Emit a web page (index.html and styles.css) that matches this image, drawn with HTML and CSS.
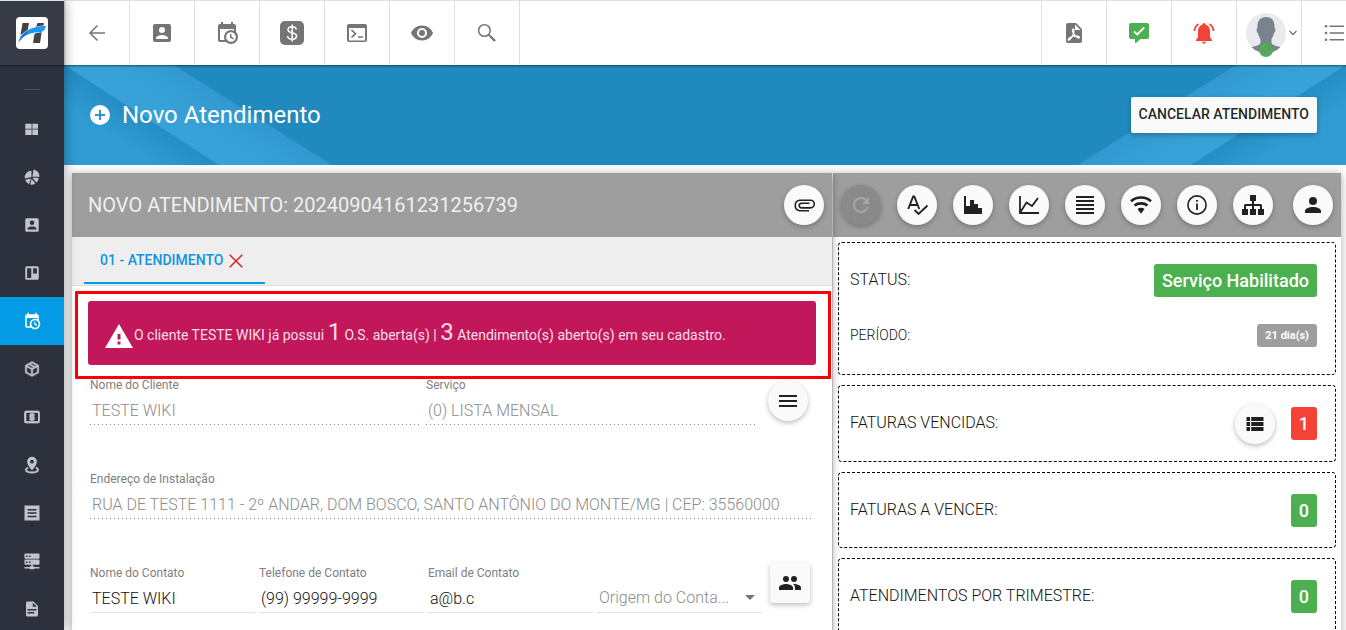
FILE: index.html
```html
<!DOCTYPE html>
<html lang="pt-BR">
<head>
<meta charset="utf-8">
<meta name="viewport" content="width=device-width, initial-scale=1">
<title>Novo Atendimento</title>
<link rel="stylesheet" href="styles.css">
</head>
<body>
<svg class="defs" aria-hidden="true">
  <symbol id="i-account-box" viewBox="0 0 24 24"><path d="M6,17C6,15 10,13.9 12,13.9C14,13.9 18,15 18,17V18H6M15,9A3,3 0 0,1 12,12A3,3 0 0,1 9,9A3,3 0 0,1 12,6A3,3 0 0,1 15,9M3,5V19A2,2 0 0,0 5,21H19A2,2 0 0,0 21,19V5A2,2 0 0,0 19,3H5C3.89,3 3,3.9 3,5Z"/></symbol>
  <symbol id="i-calendar-clock" viewBox="0 0 24 24"><path d="M15,13H16.5V15.82L18.94,17.23L18.19,18.53L15,16.69V13M19,8H5V19H9.67C9.24,18.09 9,17.07 9,16A7,7 0 0,1 16,9C17.07,9 18.09,9.24 19,9.67V8M5,21C3.89,21 3,20.1 3,19V5C3,3.89 3.89,3 5,3H6V1H8V3H16V1H18V3H19A2,2 0 0,1 21,5V11.1C22.24,12.36 23,14.09 23,16A7,7 0 0,1 16,23C14.09,23 12.36,22.24 11.1,21H5M16,11.15A4.85,4.85 0 0,0 11.15,16C11.15,18.68 13.32,20.85 16,20.85A4.85,4.85 0 0,0 20.85,16C20.85,13.32 18.68,11.15 16,11.15Z"/></symbol>
</svg>
<div class="app">
  <aside class="sidebar">
    <a class="logo" href="#" aria-label="Início">
      <svg viewBox="0 0 32 32" width="32" height="32">
        <rect width="32" height="32" rx="4" fill="#fff"/>
        <path fill="#424448" d="M6.500 6H13L11.500 14L4.500 18ZM21.500 6H28L27 10L19.500 11.500ZM18.500 17L26 13L24 26H17Z"/>
        <path fill="#0b74f0" stroke="#fff" stroke-width=".6" d="M2 26.500C3 17 12 10 30 8.500C29 14 27 15.500 21 15.500C13 16 7 19 2 26.500Z"/>
        <path fill="#149bf5" d="M12 13C17 10.500 23 9.400 29.500 9C28.500 13.500 26.500 15 21 15C17 15 14 15.800 11 17Z"/>
      </svg>
    </a>
    <hr class="side-rule">
    <nav class="side-nav">
      <a class="side-link" href="#" aria-label="Painel"><svg class="icon18" viewBox="0 0 24 24"><path d="M3 5h8.500v6.500H3zM12.500 5H20v6.500h-7.500zM3 12.500h8.500V20H3zM12.500 12.500H20V20h-7.500z"/></svg></a>
      <a class="side-link" href="#" aria-label="Gráficos"><svg class="icon18" viewBox="0 0 24 24"><path d="M12.500 11.500L14 2A10 10 0 0 1 22 11.500ZM11.300 12L2.500 14A9 9 0 0 1 11.300 3.500ZM10.500 14L8 21.500A9 9 0 0 1 3 15.700ZM12.500 13H21A9 9 0 0 1 18 19.500ZM11.500 14.500L16.500 20.500A9 9 0 0 1 9.500 22Z"/></svg></a>
      <a class="side-link" href="#" aria-label="Clientes"><svg class="icon18"><use href="#i-account-box"/></svg></a>
      <a class="side-link" href="#" aria-label="Quadros"><svg class="icon18" viewBox="0 0 24 24"><path fill-rule="evenodd" d="M5 3H19A2 2 0 0 1 21 5V19A2 2 0 0 1 19 21H5A2 2 0 0 1 3 19V5A2 2 0 0 1 5 3ZM5.500 5.500V18.500H11V5.500ZM13.500 5.500V12.500H18.500V5.500Z"/></svg></a>
      <a class="side-link is-active" href="#" aria-label="Atendimentos"><svg class="icon18"><use href="#i-calendar-clock"/></svg></a>
      <a class="side-link" href="#" aria-label="Estoque"><svg class="icon18" viewBox="0 0 24 24"><path stroke="currentColor" stroke-width=".6" d="M21,16.5C21,16.88 20.79,17.21 20.47,17.38L12.57,21.82C12.41,21.94 12.21,22 12,22C11.79,22 11.59,21.94 11.43,21.82L3.53,17.38C3.21,17.21 3,16.88 3,16.5V7.5C3,7.12 3.21,6.79 3.53,6.62L11.43,2.18C11.59,2.06 11.79,2 12,2C12.21,2 12.41,2.06 12.57,2.18L20.47,6.62C20.79,6.79 21,7.12 21,7.5V16.5M12,4.15L10.11,5.22L16,8.61L17.96,7.5L12,4.15M6.04,7.5L12,10.85L13.96,9.75L8.08,6.35L6.04,7.5M5,15.91L11,19.29V12.58L5,9.21V15.91M19,15.91V9.21L13,12.58V19.29L19,15.91Z"/></svg></a>
      <a class="side-link" href="#" aria-label="Financeiro"><svg class="icon18" viewBox="0 0 24 24"><path d="M20,18H4V6H20M20,4H4C2.89,4 2,4.89 2,6V18A2,2 0 0,0 4,20H20A2,2 0 0,0 22,18V6C22,4.89 21.1,4 20,4M11,17H13V16H14A1,1 0 0,0 15,15V12A1,1 0 0,0 14,11H11V10H15V8H13V7H11V8H10A1,1 0 0,0 9,9V12A1,1 0 0,0 10,13H13V14H9V16H11V17Z" stroke="currentColor"/></svg></a>
      <a class="side-link" href="#" aria-label="Mapa"><svg class="icon18" viewBox="0 0 24 24"><path fill-rule="evenodd" d="M12 1A6.500 6.500 0 0 1 18.500 7.500C18.500 12 12 19 12 19S5.500 12 5.500 7.500A6.500 6.500 0 0 1 12 1ZM12 5A2.500 2.500 0 1 0 12 10A2.500 2.500 0 1 0 12 5Z"/><path fill="none" stroke="currentColor" stroke-width="2.500" d="M7 15.500C1 18 4 22 12 22S23 18 17 15.500"/></svg></a>
      <a class="side-link" href="#" aria-label="Relatórios"><svg class="icon18" viewBox="0 0 24 24"><path fill-rule="evenodd" d="M2 2H22V22H2ZM6 6.500V8.500H18V6.500ZM6 11V13H18V11ZM6 15.500V17.500H18V15.500Z"/></svg></a>
      <a class="side-link" href="#" aria-label="Rede"><svg class="icon18" viewBox="0 0 24 24"><path fill-rule="evenodd" d="M3 2H21A1 1 0 0 1 22 3V8A1 1 0 0 1 21 9H3A1 1 0 0 1 2 8V3A1 1 0 0 1 3 2ZM4 4.500V6.500H6V4.500ZM8 4.500V6.500H10V4.500ZM3 10H21A1 1 0 0 1 22 11V16A1 1 0 0 1 21 17H3A1 1 0 0 1 2 16V11A1 1 0 0 1 3 10ZM4 12.500V14.500H6V12.500ZM8 12.500V14.500H10V12.500ZM11 17H13V19H15V20H22V22H15V23H9V22H2V20H9V19H11Z"/></svg></a>
      <a class="side-link" href="#" aria-label="Documentos"><svg class="icon18" viewBox="0 0 24 24"><path d="M13,9H18.5L13,3.5V9M6,2H14L20,8V20A2,2 0 0,1 18,22H6C4.89,22 4,21.1 4,20V4C4,2.89 4.89,2 6,2M15,18V16H6V18H15M18,14V12H6V14H18Z"/></svg></a>
    </nav>
  </aside>

  <div class="main">
    <header class="topbar">
      <div class="top-group">
        <button class="top-btn" aria-label="Voltar"><svg class="icon24" viewBox="0 0 24 24"><path fill="none" stroke="currentColor" stroke-width="1.500" d="M20 12H5M12.500 4.500L5 12L12.500 19.500"/></svg></button>
        <button class="top-btn" aria-label="Cliente"><svg class="icon24"><use href="#i-account-box"/></svg></button>
        <button class="top-btn" aria-label="Agenda"><svg class="icon24"><use href="#i-calendar-clock"/></svg></button>
        <button class="top-btn" aria-label="Financeiro"><svg class="icon24" viewBox="0 0 24 24"><rect width="24" height="24" rx="5"/><path fill="none" stroke="#fff" stroke-width="1.600" d="M16.300 8.500C16 6.500 14.500 5.700 12.200 5.700C9.700 5.700 8 6.900 8 8.700C8 13 16.500 10.500 16.500 15C16.500 17 14.800 18.300 12.300 18.300C9.700 18.300 7.800 17.200 7.600 15M12.200 3.500V20.500"/></svg></button>
        <button class="top-btn" aria-label="Terminal"><svg class="icon24" viewBox="0 0 24 24"><path fill-rule="evenodd" d="M4 3H20A2 2 0 0 1 22 5V19A2 2 0 0 1 20 21H4A2 2 0 0 1 2 19V5A2 2 0 0 1 4 3ZM4 7V19.500H20V7Z"/><path fill="none" stroke="currentColor" stroke-width="1.700" d="M6.500 9L10.500 12.700L6.500 16.500M13 16H18"/></svg></button>
        <button class="top-btn" aria-label="Visualizar"><svg class="icon24" viewBox="0 0 24 24"><path d="M12,9A3,3 0 0,0 9,12A3,3 0 0,0 12,15A3,3 0 0,0 15,12A3,3 0 0,0 12,9M12,17A5,5 0 0,1 7,12A5,5 0 0,1 12,7A5,5 0 0,1 17,12A5,5 0 0,1 12,17M12,4.5C7,4.5 2.73,7.61 1,12C2.73,16.39 7,19.5 12,19.5C17,19.5 21.27,16.39 23,12C21.27,7.61 17,4.5 12,4.5Z"/></svg></button>
        <button class="top-btn" aria-label="Pesquisar"><svg class="icon24" viewBox="0 0 24 24"><path fill="none" stroke="currentColor" stroke-width="1.500" d="M15.200 9.500A5.800 5.800 0 1 1 3.600 9.500A5.800 5.800 0 1 1 15.200 9.500M13.500 13.500L20 20"/><path fill="none" stroke="currentColor" stroke-width="2.200" d="M15 15L20 20"/></svg></button>
      </div>
      <div class="top-group top-end">
        <button class="top-btn" aria-label="PDF"><svg class="icon24" viewBox="0 0 24 24"><path fill-rule="evenodd" d="M6 2H14L20 8V20A2 2 0 0 1 18 22H6A2 2 0 0 1 4 20V4A2 2 0 0 1 6 2ZM13 3.500V9H18.500Z"/><path fill="none" stroke="#fff" stroke-width="1.300" d="M11 8C9.800 8.500 10.500 11 12 13.200S16 17.500 17.300 16.800S15.500 14.500 12 15.200S5.800 17.800 6.300 18.900S9.500 17 11 13.700S12 8 11 8Z"/></svg></button>
        <button class="top-btn is-green" aria-label="Mensagens"><svg class="icon24" viewBox="0 0 24 24"><path fill-rule="evenodd" d="M4 2H20A2 2 0 0 1 22 4V16A2 2 0 0 1 20 18H13.500L9 22H8V18H4A2 2 0 0 1 2 16V4A2 2 0 0 1 4 2Z"/><path fill="none" stroke="#fff" stroke-width="1.800" d="M7 10.500L10.200 13.500L17.200 6.500"/></svg></button>
        <button class="top-btn is-red" aria-label="Alertas"><svg class="icon24" viewBox="0 0 24 24"><path d="M12 2A1.500 1.500 0 0 1 13.500 3.500C16.500 4.300 18 7 18 10V16L20 19V20H4V19L6 16V10C6 7 7.500 4.300 10.500 3.500A1.500 1.500 0 0 1 12 2ZM10 20.800H14A2 2 0 0 1 10 20.800Z"/><path fill="none" stroke="currentColor" stroke-width="1.800" d="M2.500 10C2.700 7 4 4.500 6.500 3M21.500 10C21.300 7 20 4.500 17.500 3"/></svg></button>
        <button class="top-btn user-btn" aria-label="Usuário">
          <svg class="avatar" viewBox="0 0 40 40"><circle cx="20" cy="20" r="20" fill="#e9eaed"/><path fill="#79838b" d="M20 4C26 4 29 8 28.500 15C30 15 29.500 20 28 20C27.500 23 26.500 24.500 25.500 26V30C27 33 31 33 34.500 34A20 20 0 0 1 5.500 34C9 33 13 33 14.500 30V26C13.500 24.500 12.500 23 12 20C10.500 20 10 15 11.500 15C11 8 14 4 20 4Z"/></svg>
          <svg class="presence" viewBox="0 0 14 14"><circle cx="7" cy="7" r="7" fill="#4caf50"/><path fill="none" stroke="#79838b" stroke-width="1.400" d="M3 7L6 10L12 4"/></svg>
          <svg class="chevron" viewBox="0 0 8 6"><path fill="none" stroke="currentColor" stroke-width="1.300" d="M.5 1L4 4.500L7.500 1"/></svg>
        </button>
        <button class="top-btn" aria-label="Lista"><svg class="icon24" viewBox="0 0 24 24"><path d="M7.500 4.500H22V6H7.500ZM7.500 11.300H22V12.800H7.500ZM7.500 18H22V19.500H7.500Z"/><circle cx="4" cy="5.200" r="1.300"/><circle cx="4" cy="12" r="1.300"/><circle cx="4" cy="18.800" r="1.300"/></svg></button>
      </div>
    </header>

    <section class="banner">
      <svg class="banner-art" viewBox="0 0 268 100">
        <defs>
          <linearGradient id="fold" gradientUnits="userSpaceOnUse" x1="77" y1="50" x2="41" y2="106"><stop offset="0" stop-color="#258dc3"/><stop offset=".5" stop-color="#2f9bd2"/><stop offset="1" stop-color="#2f9bd2"/></linearGradient>
          <linearGradient id="band" gradientUnits="userSpaceOnUse" x1="189" y1="50" x2="165" y2="87"><stop offset="0" stop-color="#3199d0"/><stop offset="1" stop-color="#38a2d8"/></linearGradient>
        </defs>
        <path fill="url(#fold)" d="M0 0L155 100H0Z"/><path fill="url(#band)" d="M0 0H110L268 100H155Z"/>
      </svg>
      <svg class="banner-art is-mirrored" viewBox="0 0 268 100"><path fill="url(#fold)" d="M0 0L155 100H0Z"/><path fill="url(#band)" d="M0 0H110L268 100H155Z"/></svg>
      <h1 class="banner-title">
        <svg class="icon24" viewBox="0 0 24 24"><path d="M17,13H13V17H11V13H7V11H11V7H13V11H17M12,2A10,10 0 0,0 2,12A10,10 0 0,0 12,22A10,10 0 0,0 22,12A10,10 0 0,0 12,2Z"/></svg>
        <span>Novo Atendimento</span>
      </h1>
      <button class="btn-raised">CANCELAR ATENDIMENTO</button>
    </section>

    <main class="content">
      <section class="panel ticket">
        <header class="panel-head">
          <h2 class="panel-title">NOVO ATENDIMENTO: 20240904161231256739</h2>
          <button class="fab push" aria-label="Anexos"><svg class="icon24" viewBox="0 0 24 24"><path fill="none" stroke="currentColor" stroke-width="1.600" d="M17 17.700H7.500A5.300 5.300 0 0 1 7.500 7.300H18.500A3.800 3.800 0 0 1 18.500 14.900H9.500A2.300 2.300 0 0 1 9.500 10.300H17.500"/></svg></button>
        </header>
        <div class="tabs">
          <button class="tab">01 - ATENDIMENTO <svg class="tab-close" viewBox="0 0 14 14"><path d="M.7 .7L13.300 13.300M13.300 .7L.7 13.300"/></svg></button>
        </div>
        <div class="ticket-body">
          <div class="alert" role="alert">
            <svg class="alert-icon" viewBox="0 0 28 24"><path fill-rule="evenodd" d="M14 0L28 24H0ZM12.500 10V15.500H15.500V10ZM12.500 17.500V20.500H15.500V17.500Z"/></svg>
            <p class="alert-text">O cliente TESTE WIKI já possui <span class="count">1</span> O.S. aberta(s) | <span class="count">3</span> Atendimento(s) aberto(s) em seu cadastro.</p>
          </div>
          <form class="form">
            <div class="form-row row-service">
              <div class="field"><label for="cliente">Nome do Cliente</label><input id="cliente" value="TESTE WIKI" disabled></div>
              <div class="field"><label for="servico">Serviço</label><input id="servico" value="(0) LISTA MENSAL" disabled></div>
              <button type="button" class="fab" aria-label="Menu do serviço"><svg class="icon24" viewBox="0 0 24 24"><path d="M3,6H21V8H3V6M3,11H21V13H3V11M3,16H21V18H3V16Z"/></svg></button>
            </div>
            <div class="form-row">
              <div class="field"><label for="endereco">Endereço de Instalação</label><input id="endereco" value="RUA DE TESTE 1111 - 2º ANDAR, DOM BOSCO, SANTO ANTÔNIO DO MONTE/MG | CEP: 35560000" disabled></div>
            </div>
            <div class="form-row row-contact">
              <div class="field"><label for="contato">Nome do Contato</label><input id="contato" value="TESTE WIKI"></div>
              <div class="field"><label for="telefone">Telefone de Contato</label><input id="telefone" value="(99) 99999-9999"></div>
              <div class="field"><label for="email">Email de Contato</label><input id="email" value="a@b.c"></div>
              <div class="field field-select"><select id="origem" aria-label="Origem do Contato"><option>Origem do Conta...</option></select></div>
              <button type="button" class="fab is-square" aria-label="Contatos"><svg class="icon24" viewBox="0 0 24 24"><path d="M16,13C15.71,13 15.38,13 15.03,13.05C16.19,13.89 17,15 17,16.5V19H23V16.5C23,14.17 18.33,13 16,13M8,13C5.67,13 1,14.17 1,16.5V19H15V16.5C15,14.17 10.33,13 8,13M8,11A3,3 0 0,0 11,8A3,3 0 0,0 8,5A3,3 0 0,0 5,8A3,3 0 0,0 8,11M16,11A3,3 0 0,0 19,8A3,3 0 0,0 16,5A3,3 0 0,0 13,8A3,3 0 0,0 16,11Z"/></svg></button>
            </div>
          </form>
        </div>
      </section>

      <section class="panel summary">
        <header class="panel-head">
          <button class="fab" disabled aria-label="Atualizar"><svg class="icon24" viewBox="0 0 24 24"><path d="M17.650 6.350A8 8 0 1 0 19.730 14H17.650A6 6 0 1 1 12 6C13.660 6 15.140 6.690 16.220 7.780L13 11H20V4Z"/></svg></button>
          <button class="fab" aria-label="Revisar"><svg class="icon24" viewBox="0 0 24 24"><path fill="none" stroke="currentColor" stroke-width="1.900" d="M3.200 16L8.200 3.500H9.300L14.300 16M5 12H12.500"/><path fill="none" stroke="currentColor" stroke-width="1.800" d="M9.500 17L13.500 21L22.500 12.500"/></svg></button>
          <button class="fab" aria-label="Histograma"><svg class="icon24" viewBox="0 0 24 24"><path d="M3,3H5V13H9V7H13V11H17V15H21V21H3V3Z"/></svg></button>
          <button class="fab" aria-label="Consumo"><svg class="icon24" viewBox="0 0 24 24"><path fill="none" stroke="currentColor" stroke-width="1.800" d="M3 3V20H22M3.500 19L9.500 9.500L15 13L21 5"/></svg></button>
          <button class="fab" aria-label="Extrato"><svg class="icon24" viewBox="0 0 24 24"><path d="M3 3H21V5H3ZM3 7H21V9H3ZM3 11H21V13H3ZM3 15H21V17H3ZM3 19H21V21H3Z"/></svg></button>
          <button class="fab" aria-label="Conexão"><svg class="icon24" viewBox="0 0 24 24"><path fill="none" stroke="currentColor" stroke-width="2.600" d="M2 8.300C7.500 3.300 16.500 3.300 22 8.300M5.500 12.500C9 9.600 15 9.600 18.500 12.500"/><path d="M8.500 16C10.500 14.400 13.500 14.400 15.500 16L12 20.800Z"/></svg></button>
          <button class="fab" aria-label="Informações"><svg class="icon24" viewBox="0 0 24 24"><circle cx="12" cy="12" r="9.100" fill="none" stroke="currentColor" stroke-width="1.600"/><path d="M11.100 10.500H12.900V17H11.100ZM11.100 7H12.900V8.800H11.100Z"/></svg></button>
          <button class="fab" aria-label="Topologia"><svg class="icon24" viewBox="0 0 24 24"><path d="M9 2H15V8H13V11H19.500A1.500 1.500 0 0 1 21 12.500V16H23V22H17V16H19V13H13V16H15V22H9V16H11V13H5V16H7V22H1V16H3V12.500A1.500 1.500 0 0 1 4.500 11H11V8H9Z"/></svg></button>
          <button class="fab push" aria-label="Perfil"><svg class="icon24" viewBox="0 0 24 24"><path d="M12,4A4,4 0 0,1 16,8A4,4 0 0,1 12,12A4,4 0 0,1 8,8A4,4 0 0,1 12,4M12,14C16.420,14 20,15.790 20,18V20H4V18C4,15.790 7.580,14 12,14Z"/></svg></button>
        </header>
        <div class="cards">
          <div class="card card-status">
            <div class="card-row"><span class="card-label">STATUS:</span><span class="badge is-ok">Serviço Habilitado</span></div>
            <div class="card-row"><span class="card-label is-small">PERÍODO:</span><span class="badge is-small">21 dia(s)</span></div>
          </div>
          <div class="card"><div class="card-row is-tall"><span class="card-label">FATURAS VENCIDAS:</span>
            <button class="fab" aria-label="Listar faturas"><svg class="icon24" viewBox="0 0 24 24"><path d="M3.500 5H7V9H3.500ZM8.200 5H20.500V9H8.200ZM3.500 10H7V14H3.500ZM8.200 10H20.500V14H8.200ZM3.500 15H7V19H3.500ZM8.200 15H20.500V19H8.200Z"/></svg></button>
            <span class="badge is-bad">1</span></div></div>
          <div class="card"><div class="card-row is-medium"><span class="card-label">FATURAS A VENCER:</span><span class="badge is-ok">0</span></div></div>
          <div class="card"><div class="card-row is-medium"><span class="card-label">ATENDIMENTOS POR TRIMESTRE:</span><span class="badge is-ok">0</span></div></div>
        </div>
      </section>
    </main>
  </div>
</div>
</body>
</html>
```

FILE: styles.css
```css
*, *::before, *::after { box-sizing: border-box; }

body {
  margin: 0;
  background: #fff;
  color: #111;
  font-family: Roboto, "Liberation Sans", sans-serif;
  font-size: 16px;
}

button, input, select { font: inherit; }
button { border: 0; padding: 0; cursor: pointer; }
h1, h2, p { margin: 0; font-weight: 400; }
svg { display: block; fill: currentColor; flex: none; }

.defs { position: absolute; width: 0; height: 0; }
.icon24 { width: 24px; height: 24px; }
.icon18 { width: 18px; height: 18px; }

.app {
  display: flex;
  height: 100vh;
  overflow: hidden;
}

/* Sidebar */
.sidebar {
  flex: none;
  width: 64px;
  background: #2d303d;
  box-shadow: 0 0 12px rgba(0, 0, 0, .4);
  z-index: 3;
}

.logo {
  display: flex;
  align-items: center;
  justify-content: center;
  height: 65px;
  border-top: 1px solid #e0e0e0;
  background: #373b48;
  box-shadow: 0 1px 2px rgba(0, 0, 0, .5);
}

.side-rule {
  width: 16px;
  height: 1px;
  margin: 24px auto 15px;
  border: 0;
  background: #4b4e59;
}

.side-link {
  display: flex;
  align-items: center;
  justify-content: center;
  height: 48px;
  color: #c3c4c8;
}

.side-link.is-active { background: #039be5; color: #fff; }

/* Top bar */
.main {
  display: flex;
  flex: 1;
  flex-direction: column;
  min-width: 0;
  overflow: hidden;
}

.topbar {
  display: flex;
  flex: none;
  justify-content: space-between;
  height: 65px;
  margin-right: -20px;
  border-top: 1px solid #e0e0e0;
  background: #fff;
  box-shadow: 0 1px 2px rgba(0, 0, 0, .5);
  z-index: 2;
}

.top-group { display: flex; }

.top-btn {
  display: flex;
  align-items: center;
  justify-content: center;
  width: 65px;
  border-right: 1px solid #e0e0e0;
  background: none;
  color: #757575;
}

.top-group:first-child .top-btn:first-child { width: 66px; }
.top-end .top-btn { border-right: 0; border-left: 1px solid #e0e0e0; }
.top-btn.is-green { color: #4caf50; }
.top-btn.is-red { color: #f44336; }

.user-btn {
  position: relative;
  justify-content: flex-start;
  gap: 3px;
  padding-left: 9px;
}

.avatar { width: 40px; height: 40px; }
.chevron { width: 8px; height: 6px; }
.presence { position: absolute; left: 22px; bottom: 8px; width: 14px; height: 14px; }

/* Banner */
.banner {
  position: relative;
  display: flex;
  flex: none;
  align-items: center;
  justify-content: space-between;
  height: 100px;
  padding: 0 29px 0 24px;
  background: #208abe;
}

.banner-art { position: absolute; top: 0; left: 0; width: 268px; height: 100px; }
.banner-art.is-mirrored { left: auto; right: 0; transform: scaleX(-1); }

.banner-title {
  position: relative;
  display: flex;
  align-items: center;
  gap: 10px;
  color: #fff;
  font-size: 24px;
}

.btn-raised {
  position: relative;
  height: 36px;
  padding: 0 8px 2px;
  border-radius: 2px;
  background: #fafafa;
  color: rgba(0, 0, 0, .87);
  font-size: 14px;
  font-weight: 500;
  box-shadow: 0 2px 5px rgba(0, 0, 0, .26);
}

/* Panels */
.content {
  display: grid;
  flex: 1;
  grid-template-columns: 190fr 127fr;
  gap: 1px;
  min-height: 0;
  padding: 8px 5px 0 8px;
}

.panel {
  min-width: 0;
  background: #fff;
  box-shadow: 0 1px 8px rgba(0, 0, 0, .35);
}

.panel.ticket { position: relative; z-index: 1; }

.panel-head {
  display: flex;
  align-items: center;
  gap: 16px;
  height: 64px;
  padding: 0 8px;
  background: #9e9e9e;
}

.panel-title {
  padding-left: 8px;
  color: rgba(255, 255, 255, .87);
  font-size: 20px;
  white-space: nowrap;
}

.push { margin-left: auto; }

.fab {
  display: flex;
  flex: none;
  align-items: center;
  justify-content: center;
  width: 40px;
  height: 40px;
  border-radius: 50%;
  background: #fafafa;
  color: #212121;
  box-shadow: 0 2px 5px rgba(0, 0, 0, .26);
}

.fab.is-square { border-radius: 3px; }
.fab:disabled { background: #8a8a8a; color: #a7a7a7; }

/* Tabs */
.tabs {
  display: flex;
  height: 49px;
  padding-left: 12px;
  border-bottom: 1px solid #dcdcdc;
  background: #eee;
}

.tab {
  display: flex;
  align-items: center;
  gap: 6px;
  height: 47px;
  padding: 0 22px 0 16px;
  border-bottom: 2px solid #039be5;
  background: none;
  color: #1193e0;
  font-size: 14px;
  font-weight: 500;
}

.tab-close { width: 14px; height: 14px; margin-top: 2px; stroke: #d2232a; stroke-width: 1.500; }

/* Alert */
.ticket-body { padding: 15px 16px 0; }

.alert {
  position: relative;
  display: flex;
  align-items: center;
  gap: 1px;
  height: 64px;
  padding: 0 17px;
  border-radius: 3px;
  background: #c2185b;
  color: #fff;
}

.alert::after {
  content: "";
  position: absolute;
  inset: -10px -15px -14px -13px;
  border: 3px solid #f00;
  border-radius: 1px;
  z-index: 2;
}

.alert-icon { width: 28px; height: 24px; margin-top: 6px; }
.alert-text { padding-bottom: 2px; color: rgba(255, 255, 255, .87); font-size: 14px; white-space: nowrap; }
.count { font-size: 24px; }

/* Form */
.form {
  display: grid;
  gap: 46px;
  padding: 12px 4px 0 2px;
}

.form-row { display: flex; gap: 6px; }
.row-contact { gap: 4px; padding-right: 2px; }
.row-service { padding-right: 4px; }
.row-service .fab { margin: 4px 0 0 6px; }
.row-contact .fab { margin: -2px 0 0 4px; }

.field {
  display: flex;
  flex: 1 1 0;
  flex-direction: column;
  min-width: 0;
}

.field label { color: #808080; font-size: 12px; line-height: 16px; }

.field input, .field select {
  width: 100%;
  height: 32px;
  padding: 4px 2px 0;
  border: 0;
  border-bottom: 1px solid #e0e0e0;
  border-radius: 0;
  background: none;
  color: #111;
  font-weight: 300;
}

.field input:disabled {
  padding-top: 2px;
  border-bottom: 0;
  background: linear-gradient(to right, #8a8a8a 0 1px, transparent 1px) left bottom / 4px 1px repeat-x;
  color: #8c8c8c;
}

.field-select { position: relative; justify-content: flex-end; }
.field select { appearance: none; padding-top: 2px; color: #8c8c8c; }

.field-select::after {
  content: "";
  position: absolute;
  right: 7px;
  bottom: 13px;
  border: 5px solid transparent;
  border-top-color: #757575;
  border-bottom: 0;
}

/* Summary */
.cards { display: grid; gap: 10px; padding: 5px; }

.card {
  padding: 0 18px 0 11px;
  border: 1px dashed #000;
  border-radius: 4px;
}

.card-status { padding-top: 10px; padding-bottom: 11px; }
.card-row { display: flex; align-items: center; gap: 16px; min-height: 55px; }
.card-row.is-tall { min-height: 75px; }
.card-row.is-medium { min-height: 74px; }
.card-label { flex: 1; padding-bottom: 2px; font-weight: 300; }
.card-label.is-small { font-size: 14px; }

.badge {
  padding: 0 8px;
  border-radius: 3px;
  background: #9e9e9e;
  color: #fff;
  font-size: 18px;
  font-weight: 500;
  line-height: 33px;
}

.badge.is-small { font-size: 11px; line-height: 23px; font-weight: 700; }
.badge.is-ok { background: #4caf50; }
.badge.is-bad { background: #f44336; }
```
